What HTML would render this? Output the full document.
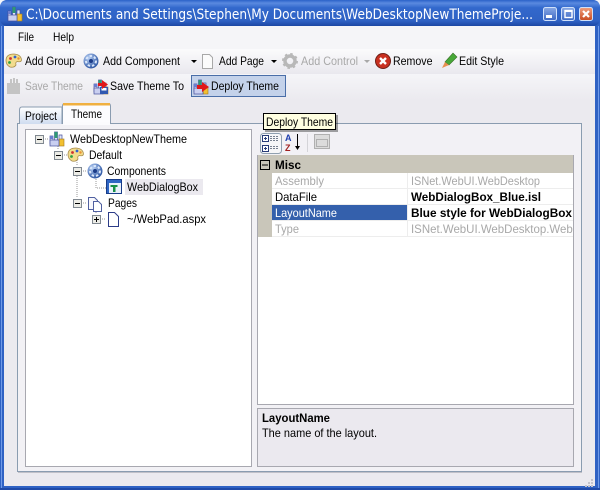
<!DOCTYPE html>
<html><head><meta charset="utf-8"><style>
html,body{margin:0;padding:0;width:600px;height:490px;overflow:hidden;background:#fff}
svg{display:block}
text{font-family:"Liberation Sans",sans-serif;font-size:12px;fill:#000}
.g{fill:#a8a8a8}.b{font-weight:bold}
.dot{stroke:#999;stroke-width:1;stroke-dasharray:1 1;fill:none}
</style></head><body>
<svg width="600" height="490" viewBox="0 0 600 490" xmlns="http://www.w3.org/2000/svg">
<defs>
<linearGradient id="tb" x1="0" y1="0" x2="0" y2="1"><stop offset="0" stop-color="#2b62c8"/><stop offset=".12" stop-color="#5a8ae0"/><stop offset=".3" stop-color="#3268cc"/><stop offset=".8" stop-color="#2f62c4"/><stop offset="1" stop-color="#1c48a4"/></linearGradient>
<linearGradient id="t1" x1="0" y1="0" x2="0" y2="1"><stop offset="0" stop-color="#fbfbfc"/><stop offset="1" stop-color="#e9e8ee"/></linearGradient>
<linearGradient id="t2" x1="0" y1="0" x2="0" y2="1"><stop offset="0" stop-color="#f5f5f8"/><stop offset="1" stop-color="#ebeaef"/></linearGradient>
<linearGradient id="tab" x1="0" y1="0" x2="0" y2="1"><stop offset="0" stop-color="#fff"/><stop offset="1" stop-color="#cfdcf0"/></linearGradient>
<linearGradient id="cl" x1="0" y1="0" x2="0" y2="1"><stop offset="0" stop-color="#f0a080"/><stop offset="1" stop-color="#c84a20"/></linearGradient>
<linearGradient id="bt" x1="0" y1="0" x2="0" y2="1"><stop offset="0" stop-color="#88a8e4"/><stop offset="1" stop-color="#3c68c4"/></linearGradient>
<radialGradient id="glb" cx=".35" cy=".3" r=".8"><stop offset="0" stop-color="#b8d0f4"/><stop offset="1" stop-color="#1f4a9c"/></radialGradient>
<g id="bot">
<path d="M1 5h3v8H1zM5.500 1h3v12h-3zM10 4h3v9h-3z" fill="#dfe4f8" stroke="#47519c" stroke-width=".7"/>
<rect x="5.500" y="1" width="3" height="6" fill="#2f9a74"/>
<rect x="1" y="5" width="3" height="3" fill="#6a7ed0"/>
<rect x="10" y="8" width="5" height="7" fill="#f2c030" stroke="#a07820" stroke-width=".6"/>
<rect x="1" y="9" width="9" height="6" fill="#c9cff0" stroke="#47519c" stroke-width=".7"/>
</g>
<g id="pal">
<path d="M0 6.500Q0 0 8 0Q15 .5 15.500 6Q15 8.500 11.500 7.500Q9 8 10 11Q8 14 4 13Q0 11 0 6.500Z" fill="#f2dc8c" stroke="#a88c4c" stroke-width=".8"/>
<circle cx="4.500" cy="4.500" r="1.400" fill="#d03030"/><circle cx="9" cy="3" r="1.400" fill="#3060d0"/><circle cx="3.500" cy="8.500" r="1.400" fill="#30a040"/><circle cx="12.500" cy="4.500" r="1.200" fill="#e89030"/>
</g>
<g id="gear">
<circle cx="8" cy="8" r="7.500" fill="url(#glb)"/>
<circle cx="8" cy="8" r="5" fill="none" stroke="#dbe8fb" stroke-width="2" stroke-dasharray="2.400 2"/>
<circle cx="8" cy="8" r="2" fill="#1c3c88"/>
</g>
</defs>

<!-- window frame -->
<rect width="600" height="490" fill="#f4f6fa"/>
<path d="M0 490V8Q0 0 8 0H592Q600 0 600 8V490Z" fill="#2f62c4"/>
<rect x="0" y="0" width="600" height="26" fill="url(#tb)" rx="7"/>
<rect x="1" y="26" width="1" height="463" fill="#6f9ae8"/>
<rect x="598" y="26" width="1" height="463" fill="#6f9ae8"/>
<rect x="4" y="26" width="591" height="460" fill="#ebeaef"/>
<rect x="0" y="488" width="600" height="2" fill="#1f4aa8"/>
<rect x="4" y="26" width="591" height="23" fill="#f5f5f8"/>
<rect x="4" y="49" width="591" height="25" fill="url(#t1)"/>
<rect x="4" y="74" width="591" height="26" fill="url(#t2)"/>

<!-- title bar -->
<use href="#bot" x="7" y="6"/>
<text x="26" y="19" textLength="507" lengthAdjust="spacingAndGlyphs" style="font-size:14px;fill:#fff;font-family:'DejaVu Sans',sans-serif">C:\Documents and Settings\Stephen\My Documents\WebDesktopNewThemeProje...</text>
<g stroke="#cfe0fa" stroke-width="1">
<rect x="543.500" y="7.500" width="13" height="13" rx="2" fill="url(#bt)"/>
<rect x="561.500" y="7.500" width="13" height="13" rx="2" fill="url(#bt)"/>
<rect x="579.500" y="7.500" width="13" height="13" rx="2" fill="url(#cl)"/>
</g>
<rect x="546" y="15" width="6" height="3" fill="#fff"/>
<rect x="565" y="10.500" width="7" height="7" fill="none" stroke="#fff" stroke-width="1.400"/><rect x="565" y="10" width="7" height="2" fill="#fff"/>
<path d="M583 11L589 17M589 11L583 17" stroke="#fff" stroke-width="2.200"/>

<!-- menu -->
<text x="18" y="41" textLength="16" lengthAdjust="spacingAndGlyphs">File</text>
<text x="53" y="41" textLength="21" lengthAdjust="spacingAndGlyphs">Help</text>

<!-- toolbar 1 -->
<use href="#pal" x="6" y="54"/>
<text x="25" y="65" textLength="50" lengthAdjust="spacingAndGlyphs">Add Group</text>
<use href="#gear" x="83" y="53"/>
<text x="103" y="65" textLength="77" lengthAdjust="spacingAndGlyphs">Add Component</text>
<path d="M191 60h6l-3 3z" fill="#000"/>
<path d="M202.500 54.500h7l3 3v11h-10z" fill="#fbfbfb" stroke="#a8a8a8"/>
<text x="219" y="65" textLength="45" lengthAdjust="spacingAndGlyphs">Add Page</text>
<path d="M271 60h6l-3 3z" fill="#000"/>
<circle cx="290" cy="61" r="5" fill="none" stroke="#b8b8b8" stroke-width="3.500"/><circle cx="290" cy="61" r="7" fill="none" stroke="#b8b8b8" stroke-width="2" stroke-dasharray="2.500 3"/>
<text x="301" y="65" textLength="57" lengthAdjust="spacingAndGlyphs" class="g">Add Control</text>
<path d="M364 60h6l-3 3z" fill="#a8a8a8"/>
<circle cx="383" cy="61" r="7.500" fill="#c83020" stroke="#702018"/>
<path d="M380 58l6 6M386 58l-6 6" stroke="#fff" stroke-width="2.400"/>
<text x="393" y="65" textLength="39.500" lengthAdjust="spacingAndGlyphs">Remove</text>
<path d="M445 62L453 53L457 57L449 65Z" fill="#48a838" stroke="#387028" stroke-width=".6"/>
<path d="M445 62L449 65L442 68Z" fill="#e89050"/>
<text x="459" y="65" textLength="45" lengthAdjust="spacingAndGlyphs">Edit Style</text>

<!-- toolbar 2 -->
<g fill="#c4c4c4">
<path d="M7 83h3v-4h2v4h1v-5h2v5h1v-4h2v4h2v11H7z"/>
</g>
<text x="25" y="90" textLength="58" lengthAdjust="spacingAndGlyphs" class="g">Save Theme</text>
<use href="#bot" x="93" y="79"/>
<rect x="100" y="87" width="8" height="7" fill="#3058b0"/><rect x="101.500" y="88" width="5" height="2.500" fill="#fff"/>
<path d="M98 83h4v-3l6 4.500-6 4.500v-3h-4z" fill="#e01818"/>
<text x="110" y="90" textLength="74" lengthAdjust="spacingAndGlyphs">Save Theme To</text>
<rect x="191.500" y="75.500" width="94" height="21" fill="#c4d2ea" stroke="#4a6ea8"/>
<use href="#bot" x="193" y="79"/>
<path d="M197 85h5v-3l7 5-7 5v-3h-5z" fill="#e01818"/>
<text x="211" y="90" textLength="68" lengthAdjust="spacingAndGlyphs">Deploy Theme</text>

<!-- tab panel -->
<rect x="17.500" y="123.500" width="564" height="348" fill="#f2f1f5" stroke="#8a9cb0"/>
<rect x="18" y="472" width="564" height="1" fill="#c0c0c8"/>
<path d="M19.500 124V110Q19.500 107 22 107H62V124" fill="url(#tab)" stroke="#8a9cb0"/>
<text x="25" y="120" textLength="32" lengthAdjust="spacingAndGlyphs">Project</text>
<path d="M62.500 124V106Q62.500 103.500 65 103.500H108Q110.500 103.500 110.500 106V124" fill="#fcfcfe" stroke="#8a9cb0"/>
<rect x="63" y="103" width="47" height="2.500" fill="#f0b040"/>
<rect x="63" y="122" width="47" height="3" fill="#fbfbfd"/>
<text x="71" y="118" textLength="31" lengthAdjust="spacingAndGlyphs">Theme</text>

<!-- tree -->
<rect x="25.500" y="129.500" width="226" height="337" fill="#fff" stroke="#a8a8b0"/>
<g class="dot">
<path d="M58 144V150"/><path d="M77 160V166M77 176V198"/>
<path d="M96 179V188H106"/><path d="M96 208V214"/>
<path d="M43 139H48M62 155H67M81 171H86M81 203H87M100 219H106"/>
</g>
<g fill="#ecece6" stroke="#808890">
<rect x="35.500" y="135.500" width="8" height="8"/><rect x="54.500" y="151.500" width="8" height="8"/>
<rect x="73.500" y="167.500" width="8" height="8"/><rect x="73.500" y="199.500" width="8" height="8"/>
<rect x="92.500" y="215.500" width="8" height="8"/>
</g>
<path d="M37 139.500h5M56 155.500h5M75 171.500h5M75 203.500h5M94 219.500h5M96.500 217v5" stroke="#000"/>
<use href="#bot" x="49" y="131"/>
<text x="70" y="143" textLength="117" lengthAdjust="spacingAndGlyphs">WebDesktopNewTheme</text>
<use href="#pal" x="68" y="148"/>
<text x="89" y="159" textLength="33" lengthAdjust="spacingAndGlyphs">Default</text>
<use href="#gear" x="87" y="163"/>
<text x="107" y="175" textLength="59" lengthAdjust="spacingAndGlyphs">Components</text>
<rect x="125" y="179" width="78" height="16" fill="#ebe9ef"/>
<rect x="106.500" y="179.500" width="15" height="14" fill="#e8f0fb" stroke="#183c88"/><rect x="107" y="180" width="14" height="3" fill="#2f66c4"/><rect x="107" y="183" width="2" height="10" fill="#2f66c4"/>
<rect x="113" y="185" width="2.500" height="7" fill="#189048"/><rect x="110.500" y="185" width="7" height="2" fill="#189048"/>
<text x="127" y="191" textLength="71" lengthAdjust="spacingAndGlyphs">WebDialogBox</text>
<path d="M88.500 197.500h6l3 3v9h-9z" fill="#f8f8fc" stroke="#5060a0"/><path d="M93.500 201.500h5l3 3v7h-8z" fill="#fff" stroke="#5060a0"/>
<text x="108" y="207" textLength="29" lengthAdjust="spacingAndGlyphs">Pages</text>
<path d="M108.500 212.500h6l4 4v10h-10z" fill="#fff" stroke="#2c3c88"/>
<text x="127" y="223" textLength="79" lengthAdjust="spacingAndGlyphs">~/WebPad.aspx</text>

<!-- property grid toolbar -->
<rect x="260.500" y="133.500" width="21" height="20" rx="3" fill="#f6f6f8" stroke="#90a0b0"/>
<g fill="#fff" stroke="#283c78"><rect x="262.500" y="135.500" width="6" height="6"/><rect x="262.500" y="145.500" width="6" height="6"/></g>
<path d="M264 138.500h3M265.500 137v3M264 148.500h3M265.500 147v3" stroke="#283c78"/>
<path d="M270 136.500h9M270 138.500h9M270 140.500h9M270 146.500h9M270 148.500h9" stroke="#788090" stroke-dasharray="2 1"/>
<text x="285" y="141" style="font-size:9px;fill:#2040b0" class="b">A</text>
<text x="285" y="151" style="font-size:9px;fill:#a02020" class="b">Z</text>
<path d="M297.500 134V149" stroke="#000"/><path d="M295 146h5l-2.500 4z" fill="#000"/>
<rect x="307" y="134" width="1" height="18" fill="#d4d4d8"/>
<rect x="314.500" y="134.500" width="15" height="14" fill="#dcdcdc" stroke="#b0b0b0"/><rect x="316.500" y="139.500" width="11" height="7" fill="none" stroke="#b0b0b0"/>

<!-- property grid -->
<rect x="257.500" y="155.500" width="316" height="249" fill="#fff" stroke="#a8a8b0"/>
<rect x="258" y="155" width="315" height="18" fill="#c9c6ba"/>
<rect x="258" y="173" width="14" height="64" fill="#c9c6ba"/>
<rect x="272" y="205" width="135" height="16" fill="#3460ac"/>
<path d="M272 188.500H573M272 204.500H573M272 220.500H573M272 236.500H573M407.500 173V237" stroke="#ededed"/>
<rect x="260.500" y="160.500" width="9" height="9" fill="none" stroke="#000"/><path d="M262 165h6" stroke="#000"/>
<text x="275" y="169" textLength="26" lengthAdjust="spacingAndGlyphs" class="b">Misc</text>
<text x="275" y="185" textLength="49" lengthAdjust="spacingAndGlyphs" class="g">Assembly</text>
<text x="411" y="185" textLength="129" lengthAdjust="spacingAndGlyphs" class="g">ISNet.WebUI.WebDesktop</text>
<text x="275" y="201" textLength="42" lengthAdjust="spacingAndGlyphs">DataFile</text>
<text x="411" y="201" textLength="130" lengthAdjust="spacingAndGlyphs" class="b">WebDialogBox_Blue.isl</text>
<text x="275" y="217" textLength="62" lengthAdjust="spacingAndGlyphs" style="fill:#fff">LayoutName</text>
<text x="411" y="217" textLength="161" lengthAdjust="spacingAndGlyphs" class="b">Blue style for WebDialogBox</text>
<text x="275" y="233" textLength="24" lengthAdjust="spacingAndGlyphs" class="g">Type</text>
<svg x="408" y="221" width="165" height="16"><text x="3" y="12" textLength="170" lengthAdjust="spacingAndGlyphs" class="g">ISNet.WebUI.WebDesktop.WebD</text></svg>

<!-- help -->
<rect x="257.500" y="408.500" width="316" height="58" fill="#ebe9ef" stroke="#a8a8b0"/>
<text x="262" y="422" textLength="68" lengthAdjust="spacingAndGlyphs" class="b">LayoutName</text>
<text x="262" y="437" textLength="115" lengthAdjust="spacingAndGlyphs">The name of the layout.</text>

<!-- tooltip -->
<rect x="265" y="115" width="73" height="17" fill="#000" opacity=".35"/>
<rect x="263.500" y="113.500" width="72" height="16" fill="#ffffe1" stroke="#000"/>
<text x="266" y="126" textLength="67" lengthAdjust="spacingAndGlyphs">Deploy Theme</text>

<!-- grip -->
<path d="M591 479h2v2h-2zM588 482h2v2h-2zM591 482h2v2h-2zM585 485h2v2h-2zM588 485h2v2h-2zM591 485h2v2h-2z" fill="#c4c4cc"/>
</svg>
</body></html>
